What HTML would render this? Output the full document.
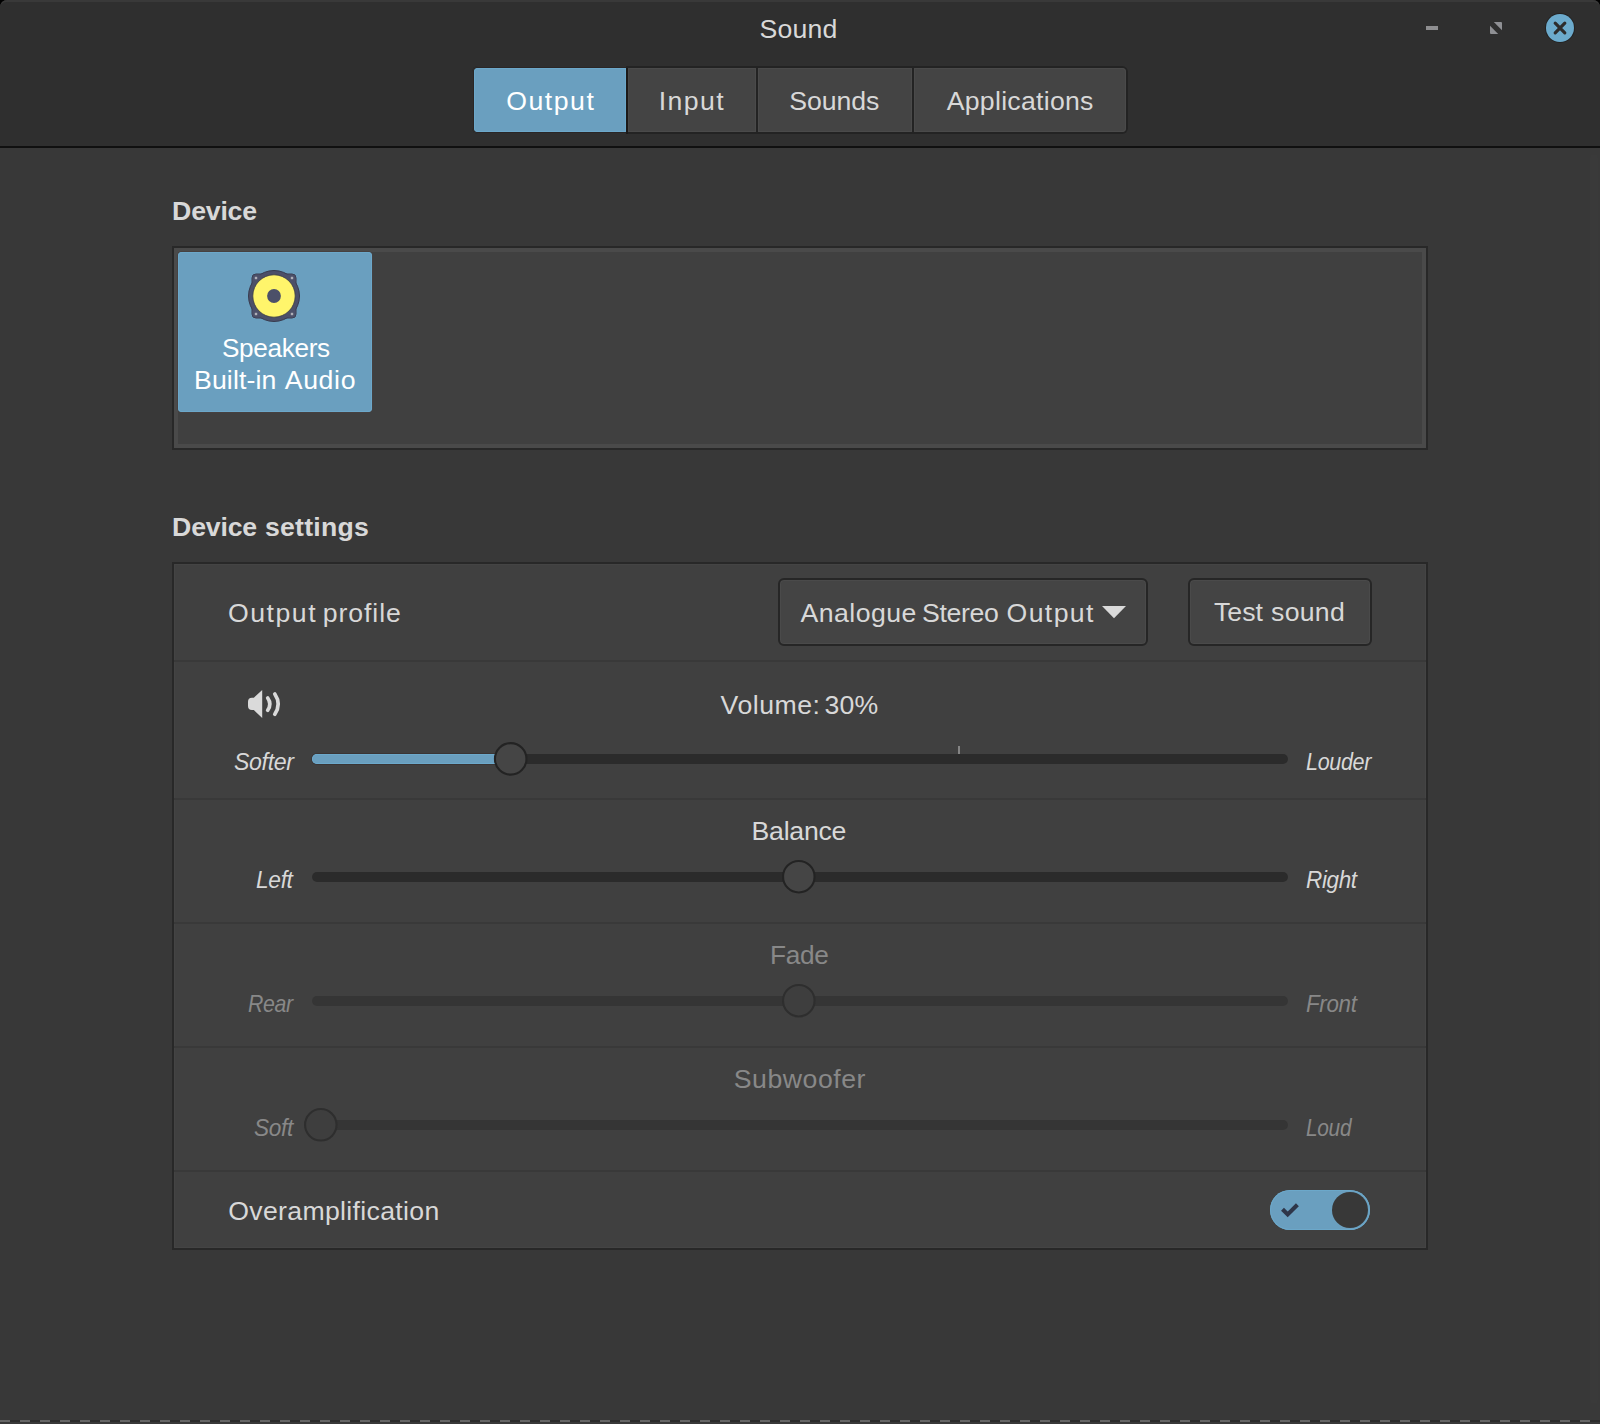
<!DOCTYPE html>
<html lang="en">
<head>
<meta charset="utf-8">
<title>Sound</title>
<style>
html,body{margin:0;padding:0;}
body{width:1600px;height:1424px;background:#000;position:relative;overflow:hidden;
  font-family:"Liberation Sans",sans-serif;}
*{box-sizing:border-box;}
.abs,.tx,svg{position:absolute;}
.tx{white-space:nowrap;line-height:40px;height:40px;margin:0;padding:0;transform-origin:0 0;}

/* window */
#win{left:0;top:0;width:1600px;height:1424px;background:#383838;border-radius:7px 7px 0 0;overflow:hidden;}
#hdr{left:0;top:0;width:1600px;height:148px;background:#2f2f2f;border-bottom:2px solid #101010;}
#hdr-hl{left:0;top:0;width:1600px;height:24px;border-top:2px solid #393939;border-radius:7px 7px 0 0;}

/* window buttons */
#btn-min{left:1426px;top:26px;width:12px;height:4px;background:#8e8e90;}
#btn-close{left:1546px;top:14px;width:28px;height:28px;border-radius:50%;background:#6cabcd;box-shadow:0 0 0 1px rgba(20,20,20,.45);}

/* tabs (stack switcher) */
#tabs{left:472px;top:66px;width:656px;height:68px;border-radius:6px;background:#232323;overflow:hidden;}
.tab{top:2px;height:64px;background:#444444;box-shadow:inset 0 0 0 1px #4a4a4a;}
#tabwrap1{left:0;top:0;width:154px;height:68px;background:#2f2f2f;}
#tabring1{left:1px;top:1px;width:153px;height:66px;background:#2a2626;border-radius:5px 0 0 5px;}
#tab1{left:2px;top:2px;width:152px;height:64px;background:#6a9fbf;border-radius:4px 0 0 4px;box-shadow:inset 0 0 0 1px #6ca8ca;}
#tabsep1{left:154px;top:2px;width:2px;height:66px;background:#1c1918;}
#tab2{left:156px;width:128px;}
#tab3{left:286px;width:154px;}
#tab4{left:442px;width:212px;border-radius:0 4px 4px 0;}

/* device list */
.box{background:#404040;border:2px solid #282828;}
#devbox{left:172px;top:246px;width:1256px;height:204px;}
#devframe{left:0;top:0;width:1252px;height:200px;border:4px solid #4a4a4a;}
#devring{left:3px;top:3px;width:196px;height:162px;border-radius:5px;background:#464141;}
#devitem{left:4px;top:4px;width:194px;height:160px;border-radius:4px;background:#6a9fbf;box-shadow:inset 0 0 0 1px #6ca8ca;}

/* settings box */
#setbox{left:172px;top:562px;width:1256px;height:688px;box-shadow:none;}
#setbox-in{left:0;top:0;width:1252px;height:684px;box-shadow:inset 0 0 0 1px #444444;}
.sep{left:0;width:1252px;height:2px;background:#393939;}

/* buttons */
.btn{background:#444444;border:2px solid #262626;border-radius:6px;box-shadow:inset 0 0 0 1px #4a4a4a;}
#combo{left:778px;top:578px;width:370px;height:68px;}
#testbtn{left:1188px;top:578px;width:184px;height:68px;}

/* sliders */
.trough{left:312px;width:976px;height:10px;border-radius:5px;background:#2b2b2b;}
.trough.dis{background:#353535;}
.fill{left:312px;height:10px;border-radius:5px 0 0 5px;background:#6a9fbf;box-shadow:inset 0 0 0 1px #6ca9cb, 0 0 0 1px rgba(50,36,36,.38);}
.knob circle{fill:#454545;stroke:#232323;stroke-width:2.1;}
.knob.dis circle{fill:#3e3e3e;stroke:#2e2e2e;}
#tick{left:958px;top:746px;width:2px;height:8px;background:#848484;}

/* switch */
#switch{left:1270px;top:1190px;width:100px;height:40px;border-radius:20px;background:#6a9fbf;box-shadow:inset 0 0 0 1px #6ca8ca;}
#switch-knob{left:1332px;top:1192px;width:36px;height:36px;border-radius:50%;background:#383838;}

#scroll-trough{left:1590px;top:148px;width:10px;height:1272px;background:#393939;}
#scroll-slider{left:1590px;top:154px;width:8px;height:1250px;border-radius:4px;background:#3a3a3a;}

/* bottom dashed line */
#dash{left:0;top:1420px;width:1600px;height:2px;
  background:repeating-linear-gradient(90deg,#666666 0,#666666 10px,#2b2b2b 10px,#2b2b2b 20px);}

#t-title{left:759.60px;top:8.66px;font-size:26.67px;letter-spacing:0.136px;color:#d8d8d8;}
#t-tab1{left:506.30px;top:80.76px;font-size:26.67px;letter-spacing:1.497px;color:#ffffff;}
#t-tab2{left:658.80px;top:80.76px;font-size:26.67px;letter-spacing:1.405px;color:#d8d8d8;}
#t-tab3{left:789.30px;top:80.76px;font-size:26.67px;letter-spacing:-0.076px;color:#d8d8d8;}
#t-tab4{left:946.70px;top:80.76px;font-size:26.67px;letter-spacing:0.272px;color:#d8d8d8;}
#t-hdev{left:172.10px;top:190.76px;font-size:26.67px;letter-spacing:-0.206px;color:#d8d8d8;font-weight:700;}
#t-spk1{left:221.52px;top:328.26px;font-size:26.67px;letter-spacing:-0.350px;color:#ffffff;transform:scaleX(0.9813);}
#t-spk2-1{left:194.00px;top:360.06px;font-size:26.67px;letter-spacing:0.135px;color:#ffffff;}
#t-spk2-2{left:284.70px;top:360.06px;font-size:26.67px;letter-spacing:0.662px;color:#ffffff;}
#t-hset-1{left:172.10px;top:506.56px;font-size:26.67px;letter-spacing:-0.186px;color:#d8d8d8;font-weight:700;}
#t-hset-2{left:264.90px;top:506.56px;font-size:26.67px;letter-spacing:0.261px;color:#d8d8d8;font-weight:700;}
#t-oprof-1{left:228.00px;top:592.56px;font-size:26.67px;letter-spacing:1.517px;color:#d8d8d8;}
#t-oprof-2{left:322.80px;top:592.56px;font-size:26.67px;letter-spacing:0.904px;color:#d8d8d8;}
#t-combo-1{left:800.40px;top:592.66px;font-size:26.67px;letter-spacing:0.482px;color:#d8d8d8;}
#t-combo-2{left:922.00px;top:592.66px;font-size:26.67px;letter-spacing:-0.342px;color:#d8d8d8;}
#t-combo-3{left:1006.60px;top:592.66px;font-size:26.67px;letter-spacing:1.357px;color:#d8d8d8;}
#t-test-1{left:1214.00px;top:592.36px;font-size:26.67px;letter-spacing:0.007px;color:#d8d8d8;}
#t-test-2{left:1271.00px;top:592.36px;font-size:26.67px;letter-spacing:0.299px;color:#d8d8d8;}
#t-vol-1{left:720.60px;top:684.56px;font-size:26.67px;letter-spacing:0.498px;color:#d8d8d8;}
#t-vol-2{left:824.60px;top:684.56px;font-size:26.67px;letter-spacing:0.125px;color:#d8d8d8;}
#t-softer{left:233.90px;top:741.79px;font-size:23.4px;letter-spacing:-0.350px;color:#d8d8d8;font-style:italic;transform:scaleX(0.9876);}
#t-louder{left:1306.40px;top:741.89px;font-size:23.4px;letter-spacing:-0.350px;color:#d8d8d8;font-style:italic;transform:scaleX(0.9199);}
#t-bal{left:751.50px;top:810.56px;font-size:26.67px;letter-spacing:-0.234px;color:#d8d8d8;}
#t-left{left:256.30px;top:859.89px;font-size:23.4px;letter-spacing:-0.350px;color:#d8d8d8;font-style:italic;transform:scaleX(0.9730);}
#t-right{left:1306.30px;top:859.69px;font-size:23.4px;letter-spacing:-0.350px;color:#d8d8d8;font-style:italic;transform:scaleX(0.9597);}
#t-fade{left:769.53px;top:934.56px;font-size:26.67px;letter-spacing:-0.350px;color:#888888;transform:scaleX(0.9845);}
#t-rear{left:248.40px;top:983.89px;font-size:23.4px;letter-spacing:-0.350px;color:#888888;font-style:italic;transform:scaleX(0.9104);}
#t-front{left:1306.30px;top:983.69px;font-size:23.4px;letter-spacing:-0.350px;color:#888888;font-style:italic;transform:scaleX(0.9562);}
#t-sub{left:733.80px;top:1058.56px;font-size:26.67px;letter-spacing:0.530px;color:#888888;}
#t-soft{left:254.00px;top:1107.89px;font-size:23.4px;letter-spacing:-0.350px;color:#888888;font-style:italic;transform:scaleX(0.9677);}
#t-loud{left:1306.30px;top:1107.69px;font-size:23.4px;letter-spacing:-0.350px;color:#888888;font-style:italic;transform:scaleX(0.8927);}
#t-over{left:228.20px;top:1190.56px;font-size:26.67px;letter-spacing:0.325px;color:#d8d8d8;}
</style>
</head>
<body>
<div id="win" class="abs">

  <!-- header bar -->
  <div id="hdr" class="abs"></div>
  <div id="hdr-hl" class="abs"></div>
  <span class="tx" id="t-title">Sound</span>
  <div id="btn-min" class="abs"></div>
  <svg id="btn-max" style="left:1490px;top:22px" width="12" height="12" viewBox="0 0 12 12">
    <path d="M3.8 0 H11 Q12 0 12 1 V8.2 Z" fill="#8f9094"/>
    <path d="M0 3.8 V11 Q0 12 1 12 H8.2 Z" fill="#8f9094"/>
  </svg>
  <div id="btn-close" class="abs"></div>
  <svg id="btn-close-x" style="left:1546px;top:14px" width="28" height="28" viewBox="0 0 28 28">
    <path d="M9.2 9.2 L18.8 18.8 M18.8 9.2 L9.2 18.8" stroke="#2d2d2d" stroke-width="3.2" stroke-linecap="round" fill="none"/>
  </svg>

  <div id="tabs" class="abs">
    <div id="tabwrap1" class="abs"><div id="tabring1" class="abs"></div><div id="tab1" class="abs"></div></div>
    <div id="tabsep1" class="abs"></div>
    <div id="tab2" class="abs tab"></div>
    <div id="tab3" class="abs tab"></div>
    <div id="tab4" class="abs tab"></div>
  </div>
  <span class="tx" id="t-tab1">Output</span>
  <span class="tx" id="t-tab2">Input</span>
  <span class="tx" id="t-tab3">Sounds</span>
  <span class="tx" id="t-tab4">Applications</span>

  <!-- Device section -->
  <span class="tx" id="t-hdev">Device</span>
  <div id="devbox" class="abs box">
    <div id="devframe" class="abs"></div>
    <div id="devring" class="abs"></div>
    <div id="devitem" class="abs"></div>
  </div>
  <svg id="spk-icon" style="left:244px;top:266px" width="60" height="60" viewBox="0 0 60 60">
    <rect x="8" y="8" width="44" height="44" rx="4" fill="#4c5069" stroke="#383b4e" stroke-width="1"/>
    <circle cx="30" cy="30" r="25.5" fill="#4c5069" stroke="#383b4e" stroke-width="1"/>
    <rect x="8.5" y="8.5" width="43" height="43" rx="3.5" fill="#4c5069"/>
    <circle cx="30" cy="30" r="21.2" fill="#fff56b" stroke="#3a3c44" stroke-width="0.8"/>
    <circle cx="30" cy="30" r="6.9" fill="#4c5069"/>
    <rect x="10.8" y="10.8" width="2.4" height="2.4" fill="#afafb7"/>
    <rect x="46.8" y="10.8" width="2.4" height="2.4" fill="#afafb7"/>
    <rect x="10.8" y="46.8" width="2.4" height="2.4" fill="#afafb7"/>
    <rect x="46.8" y="46.8" width="2.4" height="2.4" fill="#afafb7"/>
  </svg>
  <span class="tx" id="t-spk1">Speakers</span>
  <span class="tx" id="t-spk2-1">Built-in</span> <span class="tx" id="t-spk2-2">Audio</span>

  <!-- Device settings section -->
  <span class="tx" id="t-hset-1">Device</span> <span class="tx" id="t-hset-2">settings</span>
  <div id="setbox" class="abs box">
    <div id="setbox-in" class="abs"></div>
    <div class="abs sep" style="top:96px"></div>
    <div class="abs sep" style="top:234px"></div>
    <div class="abs sep" style="top:358px"></div>
    <div class="abs sep" style="top:482px"></div>
    <div class="abs sep" style="top:606px"></div>
  </div>

  <!-- row: output profile -->
  <span class="tx" id="t-oprof-1">Output</span> <span class="tx" id="t-oprof-2">profile</span>
  <div id="combo" class="abs btn"></div>
  <span class="tx" id="t-combo-1">Analogue</span> <span class="tx" id="t-combo-2">Stereo</span> <span class="tx" id="t-combo-3">Output</span>
  <svg id="combo-arrow" style="left:1100px;top:604px" width="28" height="16" viewBox="0 0 28 16">
    <path d="M2 2 H26 L14 14.3 Z" fill="#dadada"/>
  </svg>
  <div id="testbtn" class="abs btn"></div>
  <span class="tx" id="t-test-1">Test</span> <span class="tx" id="t-test-2">sound</span>

  <!-- row: volume -->
  <svg id="vol-icon" style="left:244px;top:686px" width="40" height="36" viewBox="0 0 40 36">
    <path d="M8 11.7 H9.8 L18.2 4 V32.1 L9.8 24 H8 Q4 24 4 20 V15.7 Q4 11.7 8 11.7 Z" fill="#dadada"/>
    <path d="M23.7 12 Q28 18 23.7 24.3" stroke="#dadada" stroke-width="3.7" stroke-linecap="round" fill="none"/>
    <path d="M30.8 8 Q37.6 18 30.8 28.3" stroke="#dadada" stroke-width="3.7" stroke-linecap="round" fill="none"/>
  </svg>
  <span class="tx" id="t-vol-1">Volume:</span> <span class="tx" id="t-vol-2">30%</span>
  <span class="tx" id="t-softer">Softer</span>
  <div class="abs trough" style="top:754px"></div>
  <div class="abs fill" style="top:754px;width:199px"></div>
  <div id="tick" class="abs"></div>
  <svg class="knob" style="left:490px;top:738px" width="40" height="40" viewBox="0 0 40 40"><circle cx="20.70" cy="20.90" r="15.75"/></svg>
  <span class="tx" id="t-louder">Louder</span>

  <!-- row: balance -->
  <span class="tx" id="t-bal">Balance</span>
  <span class="tx" id="t-left">Left</span>
  <div class="abs trough" style="top:872px"></div>
  <svg class="knob" style="left:778px;top:856px" width="40" height="40" viewBox="0 0 40 40"><circle cx="20.80" cy="20.70" r="15.75"/></svg>
  <span class="tx" id="t-right">Right</span>

  <!-- row: fade -->
  <span class="tx" id="t-fade">Fade</span>
  <span class="tx" id="t-rear">Rear</span>
  <div class="abs trough dis" style="top:996px"></div>
  <svg class="knob dis" style="left:778px;top:980px" width="40" height="40" viewBox="0 0 40 40"><circle cx="20.80" cy="20.70" r="15.75"/></svg>
  <span class="tx" id="t-front">Front</span>

  <!-- row: subwoofer -->
  <span class="tx" id="t-sub">Subwoofer</span>
  <span class="tx" id="t-soft">Soft</span>
  <div class="abs trough dis" style="top:1120px"></div>
  <svg class="knob dis" style="left:300px;top:1104px" width="40" height="40" viewBox="0 0 40 40"><circle cx="20.80" cy="20.80" r="15.75"/></svg>
  <span class="tx" id="t-loud">Loud</span>

  <!-- row: overamplification -->
  <span class="tx" id="t-over">Overamplification</span>
  <div id="switch" class="abs"></div>
  <svg id="switch-check" style="left:1278px;top:1200px" width="24" height="20" viewBox="0 0 24 20">
    <path d="M4.5 9.2 L9.7 14.4 L19.4 4.7" stroke="#2e3649" stroke-width="4.1" fill="none"/>
  </svg>
  <div id="switch-knob" class="abs"></div>

  <div id="scroll-trough" class="abs"></div>
  <div id="scroll-slider" class="abs"></div>
  <div id="dash" class="abs"></div>
</div>
</body>
</html>
